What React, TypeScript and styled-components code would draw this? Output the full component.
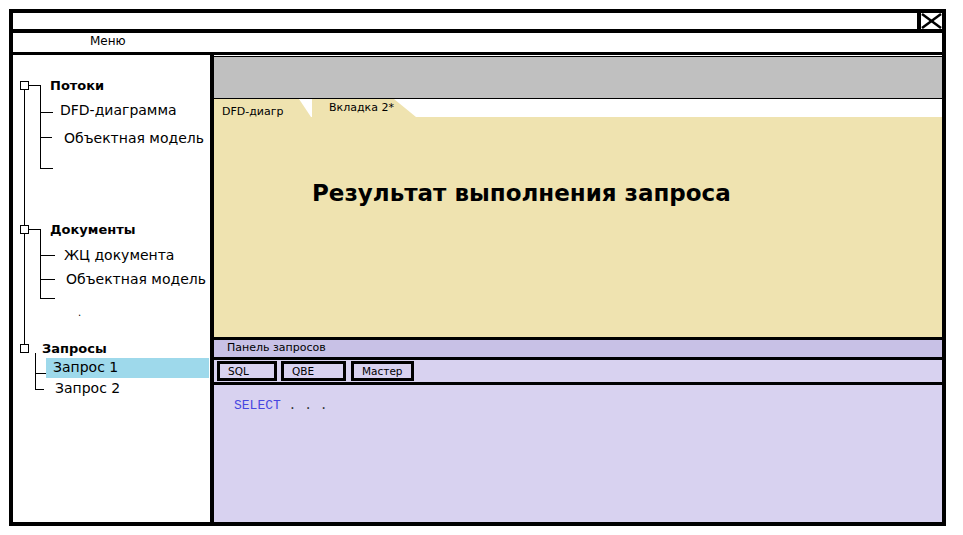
import React from 'react';
import styled, { createGlobalStyle } from 'styled-components';

const GlobalStyle = createGlobalStyle`
	html, body {
		margin: 0;
		padding: 0;
		background: #fff;
	}
	body {
		font-family: "DejaVu Sans", "Liberation Sans", sans-serif;
		color: #000;
	}
`;

const Window = styled.div`
	box-sizing: border-box;
	margin: 9px 0 0 9px;
	width: 937px;
	height: 517px;
	border: 4px solid #000;
	display: flex;
	flex-direction: column;
`;

const TitleBar = styled.div`
	height: 16px;
	border-bottom: 4px solid #000;
	display: flex;
	justify-content: flex-end;
`;

const CloseBox = styled.div`
	width: 21px;
	height: 16px;
	border-left: 4px solid #000;

	svg {
		display: block;
	}
`;

const MenuBar = styled.div`
	height: 19px;
	border-bottom: 3px solid #000;
	padding-left: 77px;
	font-size: 12px;
	line-height: 17px;
`;

const Body = styled.div`
	flex: 1;
	display: flex;
	min-height: 0;
`;

const Sidebar = styled.div`
	width: 197px;
	border-right: 4px solid #000;
	background: #fff;
`;

const Tree = styled.div`
	position: relative;
	margin-left: 11px;
	padding-top: 20px;

	&::before {
		content: '';
		position: absolute;
		left: 0;
		top: 30px;
		width: 1px;
		height: 260px;
		background: #000;
	}
`;

const GroupHeader = styled.div<{ $top?: number }>`
	height: 20px;
	margin-top: ${p => p.$top ?? 0}px;
	display: flex;
	align-items: center;
`;

const NodeBox = styled.span`
	position: relative;
	z-index: 1;
	box-sizing: border-box;
	width: 9px;
	height: 9px;
	margin-left: -4px;
	border: 1px solid #000;
	background: #fff;
`;

const Connector = styled.span<{ $w: number }>`
	width: ${p => p.$w}px;
	height: 1px;
	background: #000;
`;

const GroupLabel = styled.span<{ $gap: number }>`
	margin-left: ${p => p.$gap}px;
	font-size: 13px;
	font-weight: bold;
`;

const Children = styled.div<{ $offset: number; $lineTop: number; $lineLen: number }>`
	position: relative;
	margin-left: ${p => p.$offset}px;

	&::before {
		content: '';
		position: absolute;
		left: 0;
		top: ${p => p.$lineTop}px;
		width: 1px;
		height: ${p => p.$lineLen}px;
		background: #000;
	}
`;

const ChildRow = styled.div<{ $h: number; $tick: number; $tickW: number }>`
	position: relative;
	height: ${p => p.$h}px;
	display: flex;
	align-items: center;

	&::before {
		content: '';
		position: absolute;
		left: 0;
		top: ${p => p.$tick}px;
		width: ${p => p.$tickW}px;
		height: 1px;
		background: #000;
	}
`;

const ChildLabel = styled.span<{ $indent: number; $selected?: boolean }>`
	margin-left: ${p => p.$indent}px;
	font-size: 14px;
	white-space: nowrap;
	${p =>
		p.$selected &&
		`
		flex: 1;
		height: 20px;
		line-height: 18px;
		margin-right: 1px;
		padding-left: 7px;
		background: #9ed9eb;
	`}
`;

const Speck = styled.div<{ $h: number; $left: number }>`
	height: ${p => p.$h}px;
	padding-left: ${p => p.$left}px;
	font-size: 10px;
	line-height: 8px;
`;

const Main = styled.div`
	flex: 1;
	display: flex;
	flex-direction: column;
	min-width: 0;
`;

const GrayPanel = styled.div`
	margin-top: 1px;
	height: 41px;
	border-top: 1px solid #000;
	border-bottom: 1px solid #000;
	background: #c0c0c0;
`;

const TabStrip = styled.div`
	height: 18px;
	display: flex;
	gap: 1px;
	background: #fff;
`;

const Tab = styled.div<{ $w: number; $slant: number; $pad: number; $indent: number }>`
	box-sizing: border-box;
	width: ${p => p.$w}px;
	height: 18px;
	padding: ${p => p.$pad}px 0 0 ${p => p.$indent}px;
	background: #efe3b0;
	font-size: 11px;
	line-height: 13px;
	clip-path: polygon(0 0, calc(100% - ${p => p.$slant}px) 0, 100% 100%, 0 100%);
`;

const ResultArea = styled.div`
	height: 220px;
	background: #efe3b0;
	padding: 63px 0 0 98px;
	box-sizing: border-box;
`;

const ResultTitle = styled.div`
	font-size: 23px;
	font-weight: bold;
	line-height: 27px;
`;

const QueryHeader = styled.div`
	height: 17px;
	border-top: 3px solid #000;
	border-bottom: 3px solid #000;
	background: #c8c1e6;
	padding-left: 13px;
	font-size: 11px;
	line-height: 15px;
`;

const ButtonRow = styled.div`
	height: 22px;
	border-bottom: 3px solid #000;
	background: #d8d2f0;
	display: flex;
	align-items: center;
	padding-left: 3px;
`;

const ModeButton = styled.div<{ $w: number; $gap: number }>`
	box-sizing: border-box;
	width: ${p => p.$w}px;
	height: 20px;
	margin-right: ${p => p.$gap}px;
	border: 3px solid #000;
	padding-left: 8px;
	font-size: 10.5px;
	line-height: 14px;
`;

const Editor = styled.div`
	flex: 1;
	background: #d8d2f0;
	padding: 13px 0 0 20px;
	font-family: "Liberation Mono", "DejaVu Sans Mono", monospace;
	font-size: 13px;
	line-height: 16px;
	color: #333;
`;

const Keyword = styled.span`
	color: #4646e0;
`;

const App: React.FC = () => (
	<>
		<GlobalStyle />
		<Window>
			<TitleBar>
				<CloseBox>
					<svg width="21" height="16" viewBox="0 0 21 16">
						<line x1="1" y1="1" x2="20" y2="15" stroke="#000" strokeWidth="2.5" />
						<line x1="20" y1="1" x2="1" y2="15" stroke="#000" strokeWidth="2.5" />
					</svg>
				</CloseBox>
			</TitleBar>
			<MenuBar>Меню</MenuBar>
			<Body>
				<Sidebar>
					<Tree>
						<GroupHeader>
							<NodeBox />
							<Connector $w={11} />
							<GroupLabel $gap={10}>Потоки</GroupLabel>
						</GroupHeader>
						<Children $offset={16} $lineTop={-10} $lineLen={83}>
							<ChildRow $h={30} $tick={17} $tickW={13}>
								<ChildLabel $indent={20}>DFD-диаграмма</ChildLabel>
							</ChildRow>
							<ChildRow $h={25} $tick={12} $tickW={12}>
								<ChildLabel $indent={24}>Объектная модель</ChildLabel>
							</ChildRow>
							<ChildRow $h={36} $tick={18} $tickW={13} />
						</Children>

						<GroupHeader $top={33}>
							<NodeBox />
							<Connector $w={11} />
							<GroupLabel $gap={10}>Документы</GroupLabel>
						</GroupHeader>
						<Children $offset={16} $lineTop={-10} $lineLen={69}>
							<ChildRow $h={32} $tick={16} $tickW={15}>
								<ChildLabel $indent={24}>ЖЦ документа</ChildLabel>
							</ChildRow>
							<ChildRow $h={16} $tick={8} $tickW={15}>
								<ChildLabel $indent={26}>Объектная модель</ChildLabel>
							</ChildRow>
							<ChildRow $h={22} $tick={11} $tickW={15} />
						</Children>
						<Speck $h={29} $left={54}>.</Speck>

						<GroupHeader>
							<NodeBox />
							<GroupLabel $gap={13}>Запросы</GroupLabel>
						</GroupHeader>
						<Children $offset={11} $lineTop={-5} $lineLen={36}>
							<ChildRow $h={20} $tick={15} $tickW={11}>
								<ChildLabel $indent={11} $selected>
									Запрос 1
								</ChildLabel>
							</ChildRow>
							<ChildRow $h={20} $tick={11} $tickW={9}>
								<ChildLabel $indent={20}>Запрос 2</ChildLabel>
							</ChildRow>
						</Children>
					</Tree>
				</Sidebar>

				<Main>
					<GrayPanel />
					<TabStrip>
						<Tab $w={97} $slant={12} $pad={6} $indent={8}>
							DFD-диагр
						</Tab>
						<Tab $w={104} $slant={22} $pad={2} $indent={17}>
							Вкладка 2*
						</Tab>
					</TabStrip>
					<ResultArea>
						<ResultTitle>Результат выполнения запроса</ResultTitle>
					</ResultArea>
					<QueryHeader>Панель запросов</QueryHeader>
					<ButtonRow>
						<ModeButton $w={60} $gap={4}>SQL</ModeButton>
						<ModeButton $w={65} $gap={5}>QBE</ModeButton>
						<ModeButton $w={63} $gap={0}>Мастер</ModeButton>
					</ButtonRow>
					<Editor>
						<Keyword>SELECT</Keyword> . . .
					</Editor>
				</Main>
			</Body>
		</Window>
	</>
);

export default App;
